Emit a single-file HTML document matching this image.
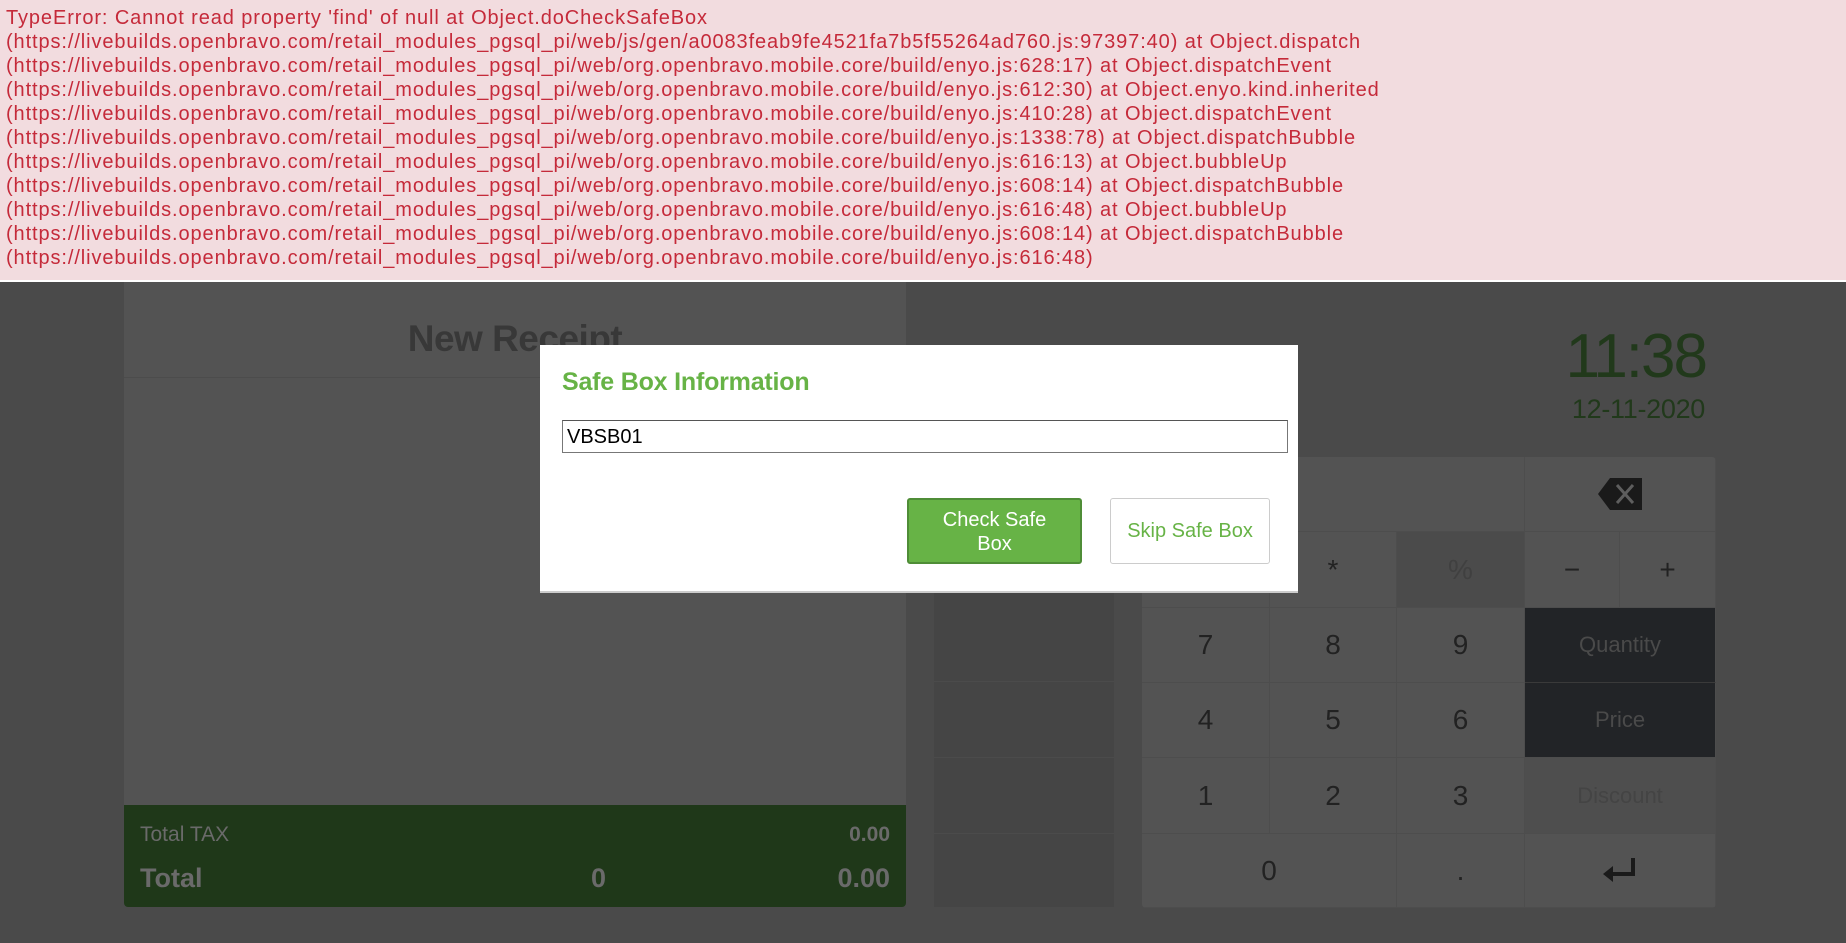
<!DOCTYPE html>
<html><head><meta charset="utf-8"><style>
*{box-sizing:border-box;margin:0;padding:0}
body{width:1846px;height:943px;overflow:hidden;background:#4a4a4a;font-family:"Liberation Sans",sans-serif;position:relative}
.abs{position:absolute}
#err{left:0;top:0;width:1846px;height:282px;background:#f2dcdf;color:#c52a3a;font-size:20px;line-height:24px;padding:6px 0 0 6px;letter-spacing:0.9px;border-bottom:2px solid #fff;white-space:nowrap}
.receipt{left:124px;top:282px;width:782px;height:625px;background:#535353;border-radius:0 0 4px 4px}
.tot{left:124px;top:805px;width:782px;height:102px;background:#1f3819;color:#6a6a6a;border-radius:0 0 4px 4px}
.mid{left:934px;top:440px;width:180px;height:467px;background:#454545}
.kp{left:1142px;top:457px;width:574px;height:451px;background:#535353;border-radius:4px;overflow:hidden}
.k{position:absolute;display:flex;align-items:center;justify-content:center;font-size:28px;color:#222;border-right:1px solid #4d4d4d;border-bottom:1px solid #4d4d4d}
.dk{background:#222427;color:#4a4a4a;font-size:22px}
</style></head><body>
<div id="err" class="abs">TypeError: Cannot read property 'find' of null at Object.doCheckSafeBox<br>(https://livebuilds.openbravo.com/retail_modules_pgsql_pi/web/js/gen/a0083feab9fe4521fa7b5f55264ad760.js:97397:40) at Object.dispatch<br>(https://livebuilds.openbravo.com/retail_modules_pgsql_pi/web/org.openbravo.mobile.core/build/enyo.js:628:17) at Object.dispatchEvent<br>(https://livebuilds.openbravo.com/retail_modules_pgsql_pi/web/org.openbravo.mobile.core/build/enyo.js:612:30) at Object.enyo.kind.inherited<br>(https://livebuilds.openbravo.com/retail_modules_pgsql_pi/web/org.openbravo.mobile.core/build/enyo.js:410:28) at Object.dispatchEvent<br>(https://livebuilds.openbravo.com/retail_modules_pgsql_pi/web/org.openbravo.mobile.core/build/enyo.js:1338:78) at Object.dispatchBubble<br>(https://livebuilds.openbravo.com/retail_modules_pgsql_pi/web/org.openbravo.mobile.core/build/enyo.js:616:13) at Object.bubbleUp<br>(https://livebuilds.openbravo.com/retail_modules_pgsql_pi/web/org.openbravo.mobile.core/build/enyo.js:608:14) at Object.dispatchBubble<br>(https://livebuilds.openbravo.com/retail_modules_pgsql_pi/web/org.openbravo.mobile.core/build/enyo.js:616:48) at Object.bubbleUp<br>(https://livebuilds.openbravo.com/retail_modules_pgsql_pi/web/org.openbravo.mobile.core/build/enyo.js:608:14) at Object.dispatchBubble<br>(https://livebuilds.openbravo.com/retail_modules_pgsql_pi/web/org.openbravo.mobile.core/build/enyo.js:616:48)</div>

<div class="abs receipt"></div>
<div class="abs" style="left:124px;top:377px;width:782px;border-top:1px solid #4c4c4c"></div>
<div class="abs" style="left:124px;top:318px;width:782px;text-align:center;font-size:37px;font-weight:bold;color:#383838;letter-spacing:-0.5px">New Receipt</div>
<div class="abs tot">
 <div class="abs" style="left:16px;top:18px;font-size:21px">Total TAX</div>
 <div class="abs" style="right:16px;top:18px;font-size:21px;font-weight:bold">0.00</div>
 <div class="abs" style="left:16px;top:58px;font-size:27px;font-weight:bold">Total</div>
 <div class="abs" style="left:467px;top:58px;font-size:27px;font-weight:bold">0</div>
 <div class="abs" style="right:16px;top:58px;font-size:27px;font-weight:bold">0.00</div>
</div>
<div class="abs mid"></div>
<div class="abs" style="left:934px;top:681px;width:180px;border-top:1px solid #4b4b4b"></div>
<div class="abs" style="left:934px;top:757px;width:180px;border-top:1px solid #4b4b4b"></div>
<div class="abs" style="left:934px;top:833px;width:180px;border-top:1px solid #4b4b4b"></div>

<div class="abs" style="right:140px;top:326px;font-size:62px;color:#21391b;line-height:1;letter-spacing:-2px">11:38</div>
<div class="abs" style="right:141px;top:396px;font-size:27px;color:#21391b;line-height:1;letter-spacing:-0.3px">12-11-2020</div>

<div class="abs kp">
 <div class="k" style="left:0;top:0;width:383px;height:75px"></div>
 <div class="k" style="left:383px;top:0;width:191px;height:75px"><svg width="44" height="34" viewBox="0 0 44 34"><path d="M0 17 L12 1 H44 V33 H12 Z" fill="#1a1a1a"/><path d="M19 8 L35 26 M35 8 L19 26" stroke="#5e5e5e" stroke-width="3"/></svg></div>
 <div class="k" style="left:0;top:75px;width:128px;height:76px"></div>
 <div class="k" style="left:128px;top:75px;width:127px;height:76px">*</div>
 <div class="k" style="left:255px;top:75px;width:128px;height:76px;background:#4b4b4b;color:#404040">%</div>
 <div class="k" style="left:383px;top:75px;width:95px;height:76px">−</div>
 <div class="k" style="left:478px;top:75px;width:96px;height:76px">+</div>
 <div class="k" style="left:0;top:151px;width:128px;height:75px">7</div>
 <div class="k" style="left:128px;top:151px;width:127px;height:75px">8</div>
 <div class="k" style="left:255px;top:151px;width:128px;height:75px">9</div>
 <div class="k dk" style="left:383px;top:151px;width:191px;height:75px;border-bottom-color:#3a3a3a">Quantity</div>
 <div class="k" style="left:0;top:226px;width:128px;height:75px">4</div>
 <div class="k" style="left:128px;top:226px;width:127px;height:75px">5</div>
 <div class="k" style="left:255px;top:226px;width:128px;height:75px">6</div>
 <div class="k dk" style="left:383px;top:226px;width:191px;height:75px">Price</div>
 <div class="k" style="left:0;top:301px;width:128px;height:76px">1</div>
 <div class="k" style="left:128px;top:301px;width:127px;height:76px">2</div>
 <div class="k" style="left:255px;top:301px;width:128px;height:76px">3</div>
 <div class="k" style="left:383px;top:301px;width:191px;height:76px;background:#4e4e4e;color:#444;font-size:22px">Discount</div>
 <div class="k" style="left:0;top:377px;width:255px;height:74px">0</div>
 <div class="k" style="left:255px;top:377px;width:128px;height:74px">.</div>
 <div class="k" style="left:383px;top:377px;width:191px;height:74px"><svg width="34" height="26" viewBox="0 0 34 26"><path d="M30 0 V16 H8" stroke="#1a1a1a" stroke-width="4" fill="none"/><path d="M0 16 L10 8 V24 Z" fill="#1a1a1a"/></svg></div>
</div>

<div class="abs" style="left:540px;top:345px;width:758px;height:248px;background:#fff;border-bottom:2px solid #ccc">
 <div class="abs" style="left:22px;top:23px;font-size:25px;font-weight:bold;color:#67b346;letter-spacing:-0.2px">Safe Box Information</div>
 <div class="abs" style="left:22px;top:75px;width:726px;height:33px;border:1px solid #777;border-top-color:#555;font-size:20px;padding:5px 4px;color:#000">VBSB01</div>
 <div class="abs" style="left:367px;top:153px;width:175px;height:66px;background:#67b346;border:2px solid #4f8d37;border-radius:3px;color:#fff;font-size:20px;line-height:24px;text-align:center;padding-top:8px">Check Safe<br>Box</div>
 <div class="abs" style="left:570px;top:153px;width:160px;height:66px;border:1px solid #ccc;border-radius:3px;color:#67b346;font-size:20px;display:flex;align-items:center;justify-content:center">Skip Safe Box</div>
</div>
</body></html>
